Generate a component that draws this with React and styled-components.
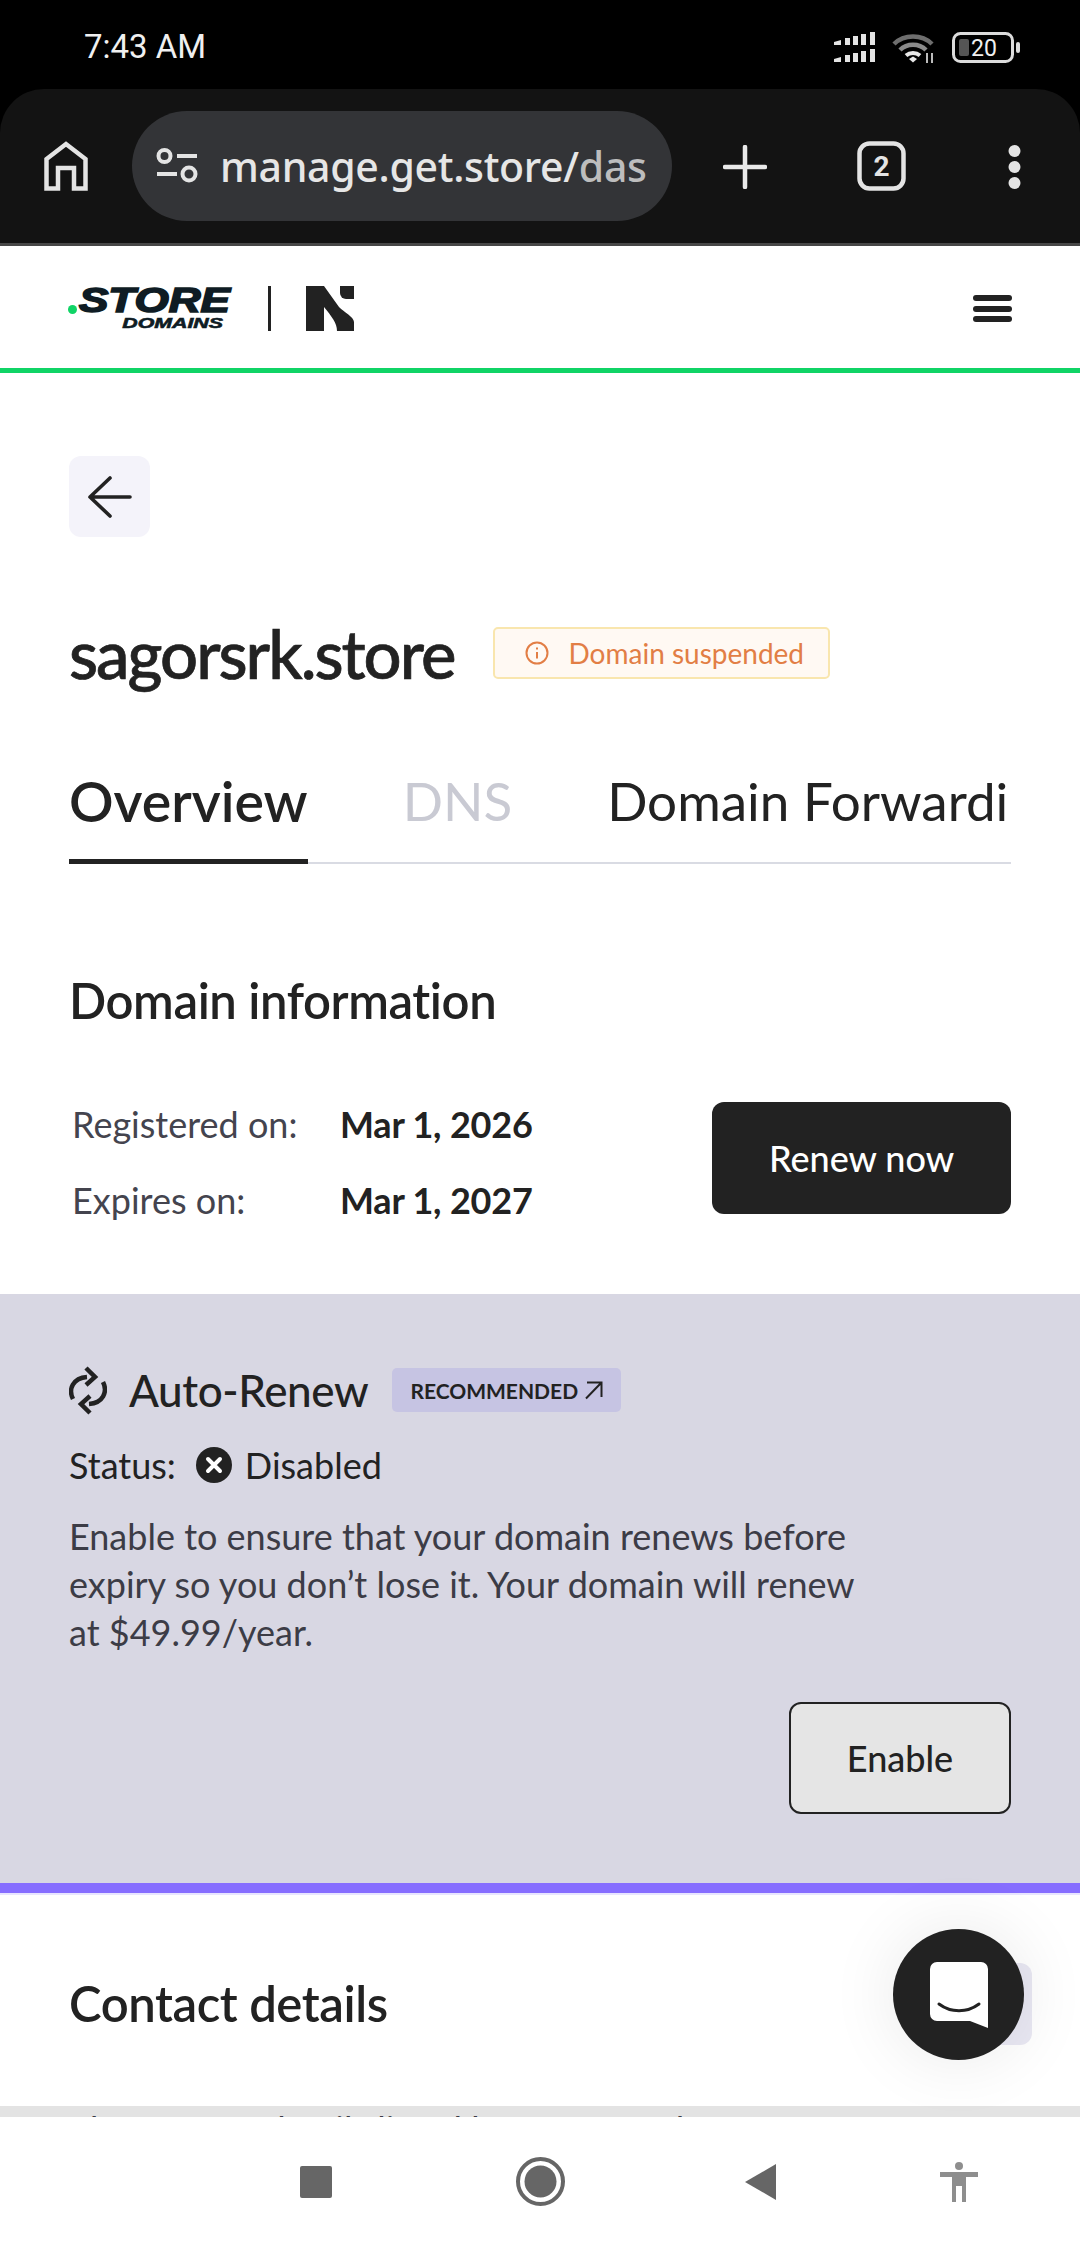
import React from 'react'
import styled, { createGlobalStyle } from 'styled-components'

const Global = createGlobalStyle`
    html, body {
        margin: 0;
        padding: 0;
        background: #fff;
    }
    * {
        box-sizing: border-box;
    }
`

const Screen = styled.div`
    width: 1080px;
    height: 2246px;
    display: flex;
    flex-direction: column;
    overflow: hidden;
    background: #000;
    font-family: Lato, "Noto Sans", sans-serif;
    color: #222;
`

/* Phone + browser chrome */
const StatusBar = styled.div`
    height: 89px;
    flex: none;
    padding: 3px 59px 0 84px;
    display: flex;
    align-items: center;
    justify-content: space-between;
    color: #f0f0f0;
    font-family: Roboto, sans-serif;
    font-size: 33px;
`

const StatusIcons = styled.div`
    display: flex;
    align-items: center;
    gap: 16px;
    margin-top: 3px;
`

const Toolbar = styled.div`
    height: 157px;
    flex: none;
    background: #131313;
    border-radius: 44px 44px 0 0;
    border-bottom: 3px solid #474747;
    padding: 22px 38px 0 44px;
    display: flex;
    align-items: flex-start;
`

const ChromeIcon = styled.div`
    flex: none;
    display: flex;
    width: ${p => p.$w}px;
    margin: ${p => p.$m};
`

const UrlPill = styled.div`
    width: 540px;
    height: 110px;
    margin-left: 44px;
    flex: none;
    border-radius: 55px;
    background: #333437;
    display: flex;
    align-items: center;
    padding-left: 24px;
    gap: 22px;
    overflow: hidden;
    white-space: nowrap;
    font-family: "Noto Sans", sans-serif;
    font-size: 41px;
    font-weight: 500;
    letter-spacing: -0.3px;
    color: #e6e6e6;
`

const UrlFade = styled.span`
    color: #bdbdbd;
`

const Page = styled.div`
    position: relative;
    flex: 1;
    min-height: 0;
    background: #fff;
    overflow: hidden;
`

/* Site header */
const SiteHeader = styled.header`
    height: 127px;
    border-bottom: 5px solid #10d466;
    padding: 40px 68px 0 68px;
    display: flex;
    align-items: flex-start;
    justify-content: space-between;
`

const Brand = styled.div`
    display: flex;
    align-items: flex-start;
`

const StoreLogo = styled.div`
    width: 162px;
    height: 45px;
    position: relative;
    color: #0f1c24;
    font-family: "Liberation Sans", sans-serif;
    font-weight: 700;
    font-style: italic;
    text-align: right;
`

const StoreDot = styled.span`
    position: absolute;
    left: 0;
    top: 19px;
    width: 9px;
    height: 9px;
    border-radius: 50%;
    background: #10d466;
`

const StoreWord = styled.div`
    font-size: 35px;
    line-height: 27px;
    height: 30px;
    -webkit-text-stroke: 1.6px #0f1c24;
    transform: scaleX(1.26);
    transform-origin: right center;
`

const DomainsWord = styled.div`
    font-size: 15px;
    line-height: 14px;
    padding-right: 5px;
    -webkit-text-stroke: 0.6px #0f1c24;
    transform: scaleX(1.42);
    transform-origin: right center;
`

const BrandDivider = styled.span`
    width: 3px;
    height: 45px;
    margin: 0 35px 0 38px;
    background: #222;
`

const Burger = styled.div`
    display: flex;
    flex-direction: column;
    gap: 4.500px;
    width: 39px;
    margin-top: 9px;
`

const BurgerLine = styled.span`
    height: 6px;
    border-radius: 3px;
    background: #222;
`

/* Main content */
const Main = styled.main`
    padding: 83px 69px 72px;
`

const BackButton = styled.div`
    width: 81px;
    height: 81px;
    border-radius: 12px;
    background: #f4f3fa;
    display: flex;
    align-items: center;
    justify-content: center;
`

const TitleRow = styled.div`
    height: 52px;
    margin-top: 90px;
    display: flex;
    align-items: center;
    gap: 38px;
`

const Title = styled.h1`
    margin: 0;
    font-size: 67px;
    line-height: 50px;
    font-weight: 500;
    letter-spacing: -2px;
    -webkit-text-stroke: 0.7px #222;
    white-space: nowrap;
`

const Badge = styled.div`
    width: 337px;
    height: 52px;
    border: 2px solid #f9e6ae;
    border-radius: 5px;
    background: #fff9f3;
    color: #e27e45;
    display: flex;
    align-items: center;
    padding-left: 30px;
    gap: 20px;
    font-size: 28px;
    white-space: nowrap;
`

const Tabs = styled.div`
    height: 94px;
    margin-top: 91px;
    display: flex;
    gap: 95px;
    overflow: hidden;
    box-shadow: inset 0 -2px 0 #d9dbe3;
    white-space: nowrap;
`

const Tab = styled.div`
    height: 94px;
    flex: none;
    font-size: ${p => (p.$active ? 55.500 : 53)}px;
    line-height: 62px;
    font-weight: ${p => (p.$active ? 600 : 400)};
    color: ${p => (p.$disabled ? '#c9cad3' : '#222')};
    border-bottom: ${p => (p.$active ? '5px solid #222' : 'none')};
`

const SectionTitle = styled.h2`
    margin: ${p => p.$margin || '0'};
    font-size: 49px;
    line-height: 60px;
    font-weight: 600;
    letter-spacing: -0.4px;
`

const InfoRow = styled.div`
    margin-top: 72px;
    display: flex;
    align-items: flex-start;
    justify-content: space-between;
`

const InfoGrid = styled.div`
    display: grid;
    grid-template-columns: 268px auto;
    grid-auto-rows: 44px;
    row-gap: 32px;
    padding-left: 3px;
    align-items: center;
    font-size: 36px;
`

const InfoLabel = styled.span`
    color: #44444e;
`

const InfoValue = styled.span`
    font-weight: 700;
    letter-spacing: -0.2px;
`

const ActionButton = styled.div`
    width: ${p => p.$w}px;
    height: 112px;
    border-radius: 12px;
    display: flex;
    align-items: center;
    justify-content: center;
    font-size: 36px;
    font-weight: 500;
    background: ${p => (p.$outline ? '#e5e5e5' : '#222')};
    color: ${p => (p.$outline ? '#222' : '#fff')};
    border: ${p => (p.$outline ? '2px solid #222' : 'none')};
`

/* Auto-renew panel */
const RenewPanel = styled.section`
    height: 599px;
    padding: 71px 69px 0;
    background: #d8d7e3;
    border-bottom: 10px solid #866dff;
    box-shadow: 0 2px 0 #e8e5ff;
`

const RenewHead = styled.div`
    display: flex;
    align-items: center;
    height: 50px;
`

const RenewTitle = styled.h3`
    margin: 0 24px 0 22px;
    font-size: 44px;
    font-weight: 500;
    letter-spacing: -0.4px;
`

const Chip = styled.div`
    height: 44px;
    width: 229px;
    border-radius: 5px;
    background: #c6c4e3;
    display: flex;
    align-items: center;
    justify-content: center;
    gap: 6px;
    font-size: 21px;
    font-weight: 700;
    white-space: nowrap;
`

const StatusRow = styled.div`
    margin-top: 28px;
    height: 44px;
    display: flex;
    align-items: center;
    font-size: 36px;
`

const StatusMark = styled.span`
    display: flex;
    margin: 0 13px 0 20px;
`

const RenewText = styled.p`
    margin: 25px 0 0;
    width: 810px;
    font-size: 36px;
    line-height: 48px;
    color: #3c3c46;
`

const RenewAction = styled.div`
    display: flex;
    justify-content: flex-end;
    margin-top: 46px;
`

/* Contact section */
const ContactHead = styled.div`
    height: 213px;
    padding: 80px 48px 0 69px;
    display: flex;
    align-items: flex-start;
    justify-content: space-between;
`

const GhostButton = styled.div`
    width: 82px;
    height: 82px;
    margin-top: -10px;
    border-radius: 12px;
    background: #e9e8f3;
`

const ContactText = styled.p`
    margin: 0;
    padding: 5px 69px 0;
    height: 60px;
    background: #e3e3e3;
    font-size: 36px;
    line-height: 36px;
    color: #3c3c46;
    white-space: nowrap;
`

const ChatBubble = styled.div`
    position: absolute;
    right: 56px;
    bottom: 57px;
    width: 131px;
    height: 131px;
    border-radius: 50%;
    background: #222;
    display: flex;
    align-items: center;
    justify-content: center;
    box-shadow: 0 0 70px rgba(0, 0, 0, 0.09);
`

/* Android nav */
const NavBar = styled.nav`
    height: 129px;
    flex: none;
    background: #fff;
    display: grid;
    grid-template-columns: 216px 229px 195px auto;
    padding-left: 300px;
    align-items: center;
`

const NavIcon = styled.div`
    display: flex;
`

const Signal = () => (
    <svg width="42" height="32" viewBox="0 0 42 32" fill="#e4e4e4">
        {[0, 17].map(y => (
            <g key={y}>
                <path d={`M0 ${y + 10}l7-2v5H0z`} />
                <rect x="11" y={y + 6} width="5" height="7" />
                <rect x="19" y={y + 4} width="5" height="9" />
                <rect x="27" y={y + 2} width="5" height="11" />
                <rect x="36" y={y} width="5" height="13" />
            </g>
        ))}
    </svg>
)

const Wifi = () => (
    <svg width="44" height="33" viewBox="0 0 44 33" fill="none">
        <path d="M2 13C12 3 30 3 40 13" stroke="#6e6e6e" strokeWidth="4.500" />
        <path d="M8 19C15 12 27 12 34 19" stroke="#8a8a8a" strokeWidth="4.500" />
        <path d="M14 24.500C18 21 24 21 28 24.500" stroke="#e8e8e8" strokeWidth="4" />
        <path d="M17 28l4-2.500 4 2.500-4 3.500z" fill="#e8e8e8" />
        <path d="M35 22v10M40 22v10" stroke="#bbb" strokeWidth="2" />
    </svg>
)

const Battery = () => (
    <svg width="69" height="31" viewBox="0 0 69 31">
        <rect x="1.500" y="1.500" width="59" height="28" rx="7" fill="none" stroke="#dcdcdc" strokeWidth="3" />
        <rect x="7" y="7" width="10" height="17" rx="2" fill="#555" />
        <text x="19" y="24" fontFamily="Roboto, sans-serif" fontSize="23" fill="#f0f0f0">20</text>
        <rect x="64" y="10" width="4" height="11" rx="2" fill="#dcdcdc" />
    </svg>
)

const HomeIcon = () => (
    <svg width="44" height="50" viewBox="0 0 44 50" fill="none" stroke="#e4e4e4" strokeWidth="4.500">
        <path d="M2.500 47.500V18L22 3l19.500 15v29.500H30V27H14v20.500z" />
    </svg>
)

const TuneIcon = () => (
    <svg width="42" height="36" viewBox="0 0 42 36" fill="none" stroke="#e4e4e4" strokeWidth="4">
        <circle cx="8.500" cy="8" r="6" />
        <path d="M21 8h20M1 26h20" />
        <circle cx="33" cy="26" r="6.500" />
    </svg>
)

const PlusIcon = () => (
    <svg width="44" height="44" viewBox="0 0 44 44" stroke="#eaeaea" strokeWidth="4.500" strokeLinecap="round">
        <path d="M22 2v40M2 22h40" />
    </svg>
)

const TabsIcon = () => (
    <svg width="49" height="50" viewBox="0 0 49 50">
        <rect x="2.500" y="2.500" width="44" height="45" rx="10" fill="none" stroke="#e4e4e4" strokeWidth="4.500" />
        <text x="24.500" y="35" textAnchor="middle" fontFamily="Roboto, sans-serif" fontWeight="700" fontSize="28" fill="#e4e4e4">2</text>
    </svg>
)

const DotsIcon = () => (
    <svg width="13" height="44" viewBox="0 0 13 44" fill="#e4e4e4">
        <circle cx="6.500" cy="6" r="6" />
        <circle cx="6.500" cy="22" r="6" />
        <circle cx="6.500" cy="38" r="6" />
    </svg>
)

const NLogo = () => (
    <svg width="48" height="45" viewBox="0 0 48 45" fill="#222">
        <path d="M0 0h18l15 21c5 5 15 10 15 15v9H31c0-8-5-14-13-24v24H0z" />
        <path d="M34 0h14v13h-8a6 6 0 0 1-6-6z" />
    </svg>
)

const ArrowLeft = () => (
    <svg width="44" height="42" viewBox="0 0 44 42" fill="none" stroke="#222" strokeWidth="3.600" strokeLinecap="round" strokeLinejoin="round">
        <path d="M22 2L2 21l20 19M2 21h40" />
    </svg>
)

const InfoIcon = () => (
    <svg width="24" height="24" viewBox="0 0 24 24" fill="none" stroke="#e27e45" strokeWidth="2">
        <circle cx="12" cy="12" r="10.500" />
        <path d="M12 11v6.500M12 6.500v2" />
    </svg>
)

const RenewIcon = () => (
    <svg width="38" height="49" viewBox="0 0 38 49" fill="none" stroke="#222" strokeWidth="4.500">
        <path d="M4 33C-1 23 4 12 18 11" />
        <path d="M17 2l9 9-9 8" />
        <path d="M34 16c5 10 0 21-14 22" />
        <path d="M21 30l-9 8 9 9" />
    </svg>
)

const ExternalIcon = () => (
    <svg width="19" height="19" viewBox="0 0 19 19" fill="none" stroke="#222" strokeWidth="2">
        <path d="M3 1.500h14.500V16M17 2L2 17.500" />
    </svg>
)

const DisabledIcon = () => (
    <svg width="36" height="36" viewBox="0 0 36 36">
        <circle cx="18" cy="18" r="18" fill="#222" />
        <path d="M12 12l12 12M24 12L12 24" stroke="#fff" strokeWidth="4" strokeLinecap="round" />
    </svg>
)

const ChatIcon = () => (
    <svg width="58" height="66" viewBox="0 0 58 66">
        <path d="M7 0h44a7 7 0 0 1 7 7v59L40 59H7a7 7 0 0 1-7-7V7a7 7 0 0 1 7-7z" fill="#fff" />
        <path d="M9 42c12 9 28 9 40 0" fill="none" stroke="#222" strokeWidth="3" strokeLinecap="round" />
    </svg>
)

const App = () => (
    <Screen>
        <Global />
        <StatusBar>
            <span>7:43 AM</span>
            <StatusIcons>
                <Signal />
                <Wifi />
                <Battery />
            </StatusIcons>
        </StatusBar>
        <Toolbar>
            <ChromeIcon $w={44} $m="30px 0 0 0"><HomeIcon /></ChromeIcon>
            <UrlPill>
                <TuneIcon />
                <span>manage.get.store/<UrlFade>das</UrlFade></span>
            </UrlPill>
            <ChromeIcon $w={44} $m="34px 0 0 51px"><PlusIcon /></ChromeIcon>
            <ChromeIcon $w={49} $m="30px 0 0 90px"><TabsIcon /></ChromeIcon>
            <ChromeIcon $w={13} $m="34px 0 0 102px"><DotsIcon /></ChromeIcon>
        </Toolbar>
        <Page>
            <SiteHeader>
                <Brand>
                    <StoreLogo>
                        <StoreDot />
                        <StoreWord>STORE</StoreWord>
                        <DomainsWord>DOMAINS</DomainsWord>
                    </StoreLogo>
                    <BrandDivider />
                    <NLogo />
                </Brand>
                <Burger>
                    <BurgerLine />
                    <BurgerLine />
                    <BurgerLine />
                </Burger>
            </SiteHeader>
            <Main>
                <BackButton><ArrowLeft /></BackButton>
                <TitleRow>
                    <Title>sagorsrk.store</Title>
                    <Badge>
                        <InfoIcon />
                        Domain suspended
                    </Badge>
                </TitleRow>
                <Tabs>
                    <Tab $active>Overview</Tab>
                    <Tab $disabled>DNS</Tab>
                    <Tab>Domain Forwarding</Tab>
                </Tabs>
                <SectionTitle $margin="106px 0 0">Domain information</SectionTitle>
                <InfoRow>
                    <InfoGrid>
                        <InfoLabel>Registered on:</InfoLabel>
                        <InfoValue>Mar 1, 2026</InfoValue>
                        <InfoLabel>Expires on:</InfoLabel>
                        <InfoValue>Mar 1, 2027</InfoValue>
                    </InfoGrid>
                    <ActionButton $w={299}>Renew now</ActionButton>
                </InfoRow>
            </Main>
            <RenewPanel>
                <RenewHead>
                    <RenewIcon />
                    <RenewTitle>Auto-Renew</RenewTitle>
                    <Chip>RECOMMENDED <ExternalIcon /></Chip>
                </RenewHead>
                <StatusRow>
                    Status:
                    <StatusMark><DisabledIcon /></StatusMark>
                    Disabled
                </StatusRow>
                <RenewText>
                    Enable to ensure that your domain renews before expiry so you don’t lose it. Your domain will renew at $49.99/year.
                </RenewText>
                <RenewAction>
                    <ActionButton $w={222} $outline>Enable</ActionButton>
                </RenewAction>
            </RenewPanel>
            <ContactHead>
                <SectionTitle>Contact details</SectionTitle>
                <GhostButton />
            </ContactHead>
            <ContactText>The contact details listed here are used to contact you</ContactText>
            <ChatBubble><ChatIcon /></ChatBubble>
        </Page>
        <NavBar>
            <NavIcon>
                <svg width="32" height="32" viewBox="0 0 32 32"><rect width="32" height="32" rx="2" fill="#666" /></svg>
            </NavIcon>
            <NavIcon>
                <svg width="49" height="49" viewBox="0 0 49 49">
                    <circle cx="24.500" cy="24.500" r="22.500" fill="none" stroke="#666" strokeWidth="4" />
                    <circle cx="24.500" cy="24.500" r="16" fill="#666" />
                </svg>
            </NavIcon>
            <NavIcon>
                <svg width="31" height="36" viewBox="0 0 31 36"><path d="M31 0v36L0 18z" fill="#666" /></svg>
            </NavIcon>
            <NavIcon>
                <svg width="38" height="40" viewBox="0 0 38 40" fill="#8e8e8e">
                    <circle cx="19" cy="4" r="4" />
                    <path d="M0 10h38v5H26v25h-4V24h-6v16h-4V15H0z" />
                </svg>
            </NavIcon>
        </NavBar>
    </Screen>
)

export default App
